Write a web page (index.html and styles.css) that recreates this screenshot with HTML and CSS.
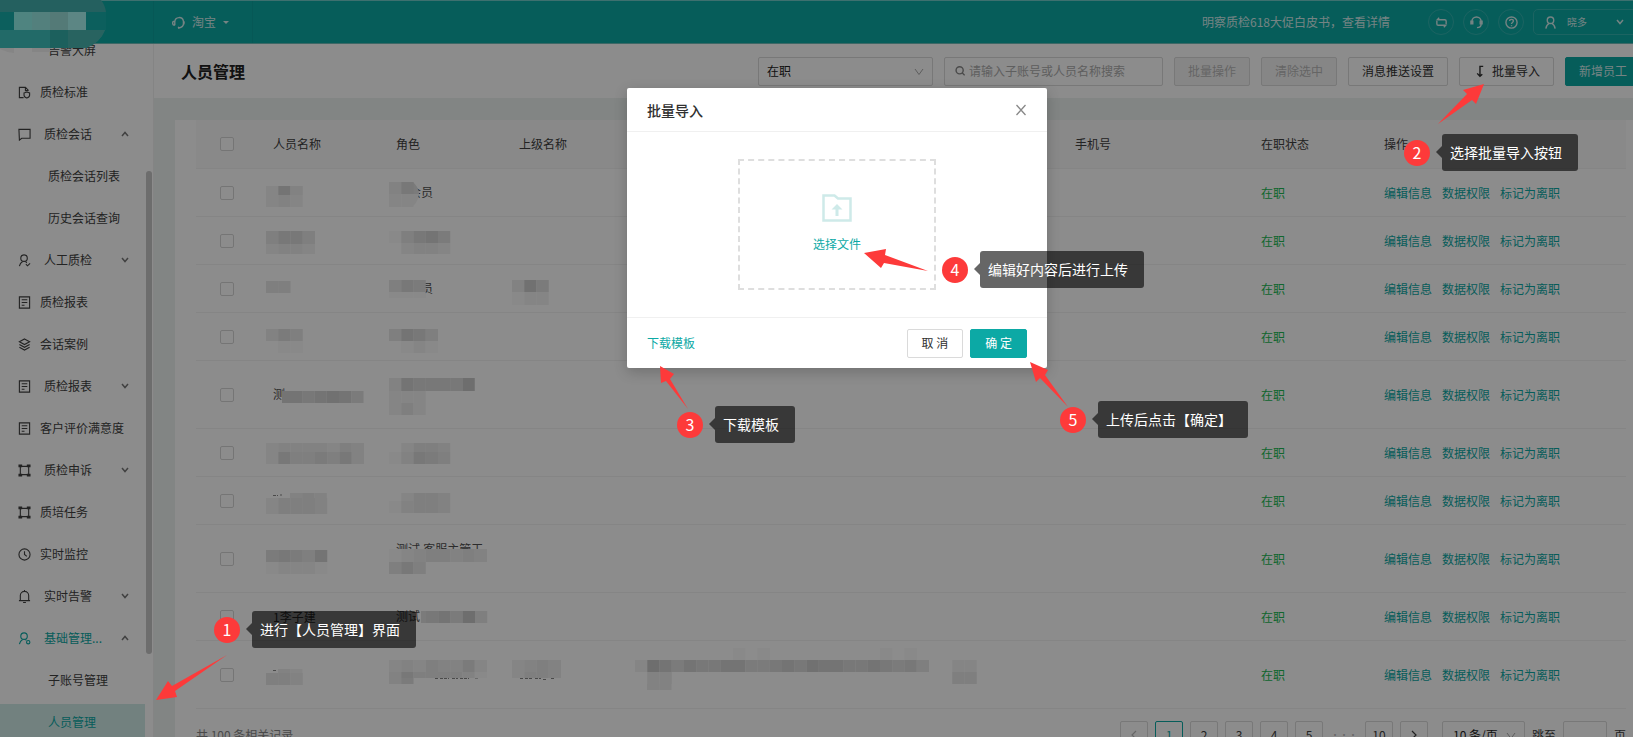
FILE: index.html
```html
<!DOCTYPE html>
<html lang="zh-CN">
<head>
<meta charset="utf-8">
<title>人员管理</title>
<link rel="stylesheet" href="styles.css">
</head>
<body>
<svg class="sprite" aria-hidden="true">
  <symbol id="i-std" viewBox="0 0 14 14"><path d="M6 12.500H1.500v-11H8L11 4.500V5M8 1.500V5h3"/><path d="M6.500 7.500 9.500 6.500 12.500 7.500V10c0 1.500-1.500 2.500-3 3-1.500-.5-3-1.500-3-3z"/></symbol>
  <symbol id="i-chat" viewBox="0 0 14 14"><path d="M1 1.500h12v9.500H4L1.500 13z"/></symbol>
  <symbol id="i-person" viewBox="0 0 14 14"><circle cx="6.500" cy="4.500" r="3.500"/><path d="M5 8C3 9 2 10.500 1.500 13M8 8l1.500 1.500M8.500 11l1.700 1.700L13 10"/></symbol>
  <symbol id="i-report" viewBox="0 0 14 14"><path d="M1.500 1h11v12h-11zM4 4h6M4 7h6M4 10h3"/></symbol>
  <symbol id="i-layers" viewBox="0 0 14 14"><path d="M7 1l5.500 3L7 7 1.500 4zM1.500 7 7 10l5.500-3M1.500 10 7 13l5.500-3"/></symbol>
  <symbol id="i-frame" viewBox="0 0 14 14"><path d="M2.500 2.500h9v9h-9z"/><path class="solid" d="M.5.5h4v3h-4zM9.500.5h4v3h-4zM.5 10.500h4v3h-4zM9.500 10.500h4v3h-4z"/></symbol>
  <symbol id="i-clock" viewBox="0 0 14 14"><circle cx="7" cy="7" r="6"/><path d="M7 3.500V7l2.500 2"/></symbol>
  <symbol id="i-bell" viewBox="0 0 14 14"><path d="M1 11.500h12M2.500 11.500V6a4.500 4.500 0 0 1 9 0v5.500M7 0v1.500M5.500 13.500h3"/></symbol>
  <symbol id="i-admin" viewBox="0 0 14 14"><circle cx="6.500" cy="4.500" r="3.500"/><path d="M5 8C3 9 2 10.500 1.500 13M8 8l1 1"/><circle cx="11" cy="11" r="1.800"/></symbol>
  <symbol id="i-down" viewBox="0 0 10 10"><path d="M2 3l3 3.500L8 3"/></symbol>
  <symbol id="i-up" viewBox="0 0 10 10"><path d="M2 7l3-3.500L8 7"/></symbol>
  <symbol id="i-wide" viewBox="0 0 10 10"><path d="M1 2l4 5.500L9 2"/></symbol>
  <symbol id="i-headset" viewBox="0 0 14 14"><path d="M3 10V6a4.700 4.700 0 0 1 9.300-.5v3c0 2-1.500 3.500-5 4.500l-.5-1.500M3 5.500C1 5.500.7 6.500.7 7.800S1 10 3 10M12.300 5.500c1 .3 1.200 3.200-.3 4"/></symbol>
</svg>

<div class="app">
  <header class="topbar">
    <div class="topbar-brand"></div>
    <button class="shop" type="button">
      <svg class="ico light"><use href="#i-headset"/></svg>淘宝<span class="caret"></span>
    </button>
    <a class="notice" href="#">明察质检618大促白皮书，查看详情</a>
    <div class="topbar-tools">
      <button class="round" type="button" aria-label="切换"><svg class="ico light" viewBox="0 0 14 14"><path d="M4.500 2 2.500 4H10.500q1.500 0 1.500 1.500v3M9.500 12l2-2H3.500Q2 10 2 8.500V5.500"/></svg></button>
      <button class="round" type="button" aria-label="客服"><svg class="ico light" viewBox="0 0 14 14"><path d="M2 8.500V6a5 5 0 0 1 10 0v3c0 2-1.500 3.500-4.500 3.500M1 5.500v3h2v-3zM13 5.500v3h-2v-3z"/></svg></button>
      <button class="round" type="button" aria-label="帮助"><svg class="ico light" viewBox="0 0 14 14"><circle cx="7" cy="7" r="6"/><path d="M5 5.500C5 3 9 3 9 5.500 9 7 7 7 7 8.500M7 10v1"/></svg></button>
      <button class="user" type="button"><svg class="ico light" viewBox="0 0 14 14"><circle cx="7" cy="4.500" r="3.500"/><path d="M5.500 8C3.500 9 2.500 10.500 2 13.500M8.500 8c2 1 3 2.500 3.500 5.500"/></svg><span>晓多</span><svg class="chev light"><use href="#i-down"/></svg></button>
    </div>
  </header>

  <div class="body">
    <nav class="side">
      <ul class="menu">
        <li class="sub">告警大屏</li>
        <li><svg class="ico"><use href="#i-std"/></svg>质检标准</li>
        <li class="group"><svg class="ico"><use href="#i-chat"/></svg>质检会话<svg class="chev"><use href="#i-up"/></svg></li>
        <li class="sub">质检会话列表</li>
        <li class="sub">历史会话查询</li>
        <li class="group"><svg class="ico"><use href="#i-person"/></svg>人工质检<svg class="chev"><use href="#i-down"/></svg></li>
        <li><svg class="ico"><use href="#i-report"/></svg>质检报表</li>
        <li><svg class="ico"><use href="#i-layers"/></svg>会话案例</li>
        <li class="group"><svg class="ico"><use href="#i-report"/></svg>质检报表<svg class="chev"><use href="#i-down"/></svg></li>
        <li><svg class="ico"><use href="#i-report"/></svg>客户评价满意度</li>
        <li class="group"><svg class="ico"><use href="#i-frame"/></svg>质检申诉<svg class="chev"><use href="#i-down"/></svg></li>
        <li><svg class="ico"><use href="#i-frame"/></svg>质培任务</li>
        <li><svg class="ico"><use href="#i-clock"/></svg>实时监控</li>
        <li class="group"><svg class="ico"><use href="#i-bell"/></svg>实时告警<svg class="chev"><use href="#i-down"/></svg></li>
        <li class="group open"><svg class="ico"><use href="#i-admin"/></svg>基础管理...<svg class="chev"><use href="#i-up"/></svg></li>
        <li class="sub">子账号管理</li>
        <li class="sub active">人员管理</li>
      </ul>
      <span class="thumb"></span>
    </nav>

    <main class="main">
      <div class="toolbar">
        <h1>人员管理</h1>
        <div class="select"><select aria-label="在职状态"><option>在职</option></select><svg class="chev"><use href="#i-wide"/></svg></div>
        <label class="search"><svg class="chev" viewBox="0 0 14 14"><circle cx="6.500" cy="6" r="5"/><path d="M10 9.500l3.500 3.500"/></svg><input type="text" placeholder="请输入子账号或人员名称搜索" aria-label="搜索"></label>
        <button class="btn" type="button" disabled>批量操作</button>
        <button class="btn" type="button" disabled>清除选中</button>
        <button class="btn" type="button">消息推送设置</button>
        <button class="btn" type="button"><svg class="ico" viewBox="0 0 14 14"><path d="M11 1.500H7.500V11M4.500 9 7.500 12.200 10 10"/></svg>批量导入</button>
        <button class="btn primary" type="button">新增员工</button>
      </div>

      <section class="card">
        <table class="staff">
          <colgroup><col class="c-check"><col class="c-text"><col class="c-text"><col class="c-text"><col><col class="c-text"><col class="c-phone"><col class="c-text"><col class="c-ops"></colgroup>
          <thead>
            <tr><th class="chk"><input type="checkbox" aria-label="全选"></th><th>人员名称</th><th>角色</th><th>上级名称</th><th></th><th></th><th>手机号</th><th>在职状态</th><th>操作</th></tr>
          </thead>
          <tbody>
            <tr><td class="chk"><input type="checkbox" aria-label="选择"></td>
              <td class="pix"><svg data-strips="0,17,9,273;0,26,12,232"></svg></td>
              <td class="pix"><svg data-strips="0,13,12,36;0,25,13,22"><text x="20" y="28">会员</text><path class="blot" d="M24 13q6 6 6 12H24z"/><path class="blot pale" d="M24 25h6q-1 8-6 12z"/></svg></td>
              <td></td><td></td><td></td><td></td><td class="on">在职</td><td class="ops"><a href="#">编辑信息</a><a href="#">数据权限</a><a href="#">标记为离职</a></td></tr>
            <tr><td class="chk"><input type="checkbox" aria-label="选择"></td>
              <td class="pix"><svg data-strips="0,14,13,4664;0,27,10,2332"></svg></td>
              <td class="pix"><svg data-strips="0,14,12,14675;0,26,11,02332"></svg></td>
              <td></td><td></td><td></td><td></td><td class="on">在职</td><td class="ops"><a href="#">编辑信息</a><a href="#">数据权限</a><a href="#">标记为离职</a></td></tr>
            <tr><td class="chk"><input type="checkbox" aria-label="选择"></td>
              <td class="pix"><svg data-strips="0,16,12,44"></svg></td>
              <td class="pix"><svg data-strips="0,15,12,465;0,27,6,111"><text x="32" y="28">员</text></svg></td>
              <td class="pix"><svg data-strips="0,15,12,385;0,27,13,122"></svg></td>
              <td></td><td></td><td></td><td class="on">在职</td><td class="ops"><a href="#">编辑信息</a><a href="#">数据权限</a><a href="#">标记为离职</a></td></tr>
            <tr><td class="chk"><input type="checkbox" aria-label="选择"></td>
              <td class="pix"><svg data-strips="0,16,12,354;0,28,12,011"></svg></td>
              <td class="pix"><svg data-strips="0,16,12,4764;0,28,12,0121"></svg></td>
              <td></td><td></td><td></td><td></td><td class="on">在职</td><td class="ops"><a href="#">编辑信息</a><a href="#">数据权限</a><a href="#">标记为离职</a></td></tr>
            <tr class="tall"><td class="chk"><input type="checkbox" aria-label="选择"></td>
              <td class="pix"><svg data-strips="16,30,12,7;24,30,12,767875"><text x="7" y="38">测</text></svg></td>
              <td class="pix"><svg data-strips="0,17,13,3766669;0,30,12,222;0,42,12,242"></svg></td>
              <td></td><td></td><td></td><td></td><td class="on">在职</td><td class="ops"><a href="#">编辑信息</a><a href="#">数据权限</a><a href="#">标记为离职</a></td></tr>
            <tr><td class="chk"><input type="checkbox" aria-label="选择"></td>
              <td class="pix"><svg data-strips="0,14,9,23333243;0,23,12,26445463"></svg></td>
              <td class="pix"><svg data-strips="0,14,9,02443;0,23,12,13654"></svg></td>
              <td></td><td></td><td></td><td></td><td class="on">在职</td><td class="ops"><a href="#">编辑信息</a><a href="#">数据权限</a><a href="#">标记为离职</a></td></tr>
            <tr><td class="chk"><input type="checkbox" aria-label="选择"></td>
              <td class="pix"><svg data-strips="24,16,5,343;0,21,16,24443"><path class="scrap" d="M7 18.500h5M14 18h2"/></svg></td>
              <td class="pix"><svg data-strips="0,16,8,02443;0,24,12,13443"></svg></td>
              <td></td><td></td><td></td><td></td><td class="on">在职</td><td class="ops"><a href="#">编辑信息</a><a href="#">数据权限</a><a href="#">标记为离职</a></td></tr>
            <tr class="tall"><td class="chk"><input type="checkbox" aria-label="选择"></td>
              <td class="pix"><svg data-strips="0,25,12,56547;0,37,12,12221"></svg></td>
              <td class="pix"><svg data-strips="0,24,13,12344343;0,37,12,464"><clipPath id="cut"><path d="M0 0h110v24H0z"/></clipPath><text x="7" y="29" clip-path="url(#cut)">测试,客服主管工</text></svg></td>
              <td></td><td></td><td></td><td></td><td class="on">在职</td><td class="ops"><a href="#">编辑信息</a><a href="#">数据权限</a><a href="#">标记为离职</a></td></tr>
            <tr><td class="chk"><input type="checkbox" aria-label="选择"></td>
              <td>1李子建</td>
              <td class="pix"><svg data-strips="32,18,12,5;37,18,12,67594"><text x="7" y="28">测试</text></svg></td>
              <td></td><td></td><td></td><td></td><td class="on">在职</td><td class="ops"><a href="#">编辑信息</a><a href="#">数据权限</a><a href="#">标记为离职</a></td></tr>
            <tr class="tall"><td class="chk"><input type="checkbox" aria-label="选择"></td>
              <td class="pix"><svg data-strips="12,28,4,32;0,32,12,443"><path class="scrap" d="M7 29.500h4"/></svg></td>
              <td class="pix"><svg data-strips="0,19,12,23243352;0,31,6,36444431;0,37,6,35"><path class="scrap" d="M46 37.500h3M51 37.500h9M63 37.500h6M71 37.500h9M86 37h4"/></svg></td>
              <td class="pix"><svg data-strips="0,19,12,2343;0,31,6,2443"><path class="scrap" d="M8 37.500h3M13 37.500h8M23 37.500h6M31 38.500h4M39 37.500h3"/></svg></td>
              <td class="pix"><svg data-strips="98,7,12,1010000000001010;0,19,12,297576677556768776676564;0,31,12,033;12,43,6,33"></svg></td>
              <td class="pix"><svg data-strips="-5,19,12,022;-5,31,12,044"></svg></td>
              <td></td><td class="on">在职</td><td class="ops"><a href="#">编辑信息</a><a href="#">数据权限</a><a href="#">标记为离职</a></td></tr>
          </tbody>
        </table>

        <div class="pager">
          <span class="total">共 100 条相关记录</span>
          <button type="button" class="dim" aria-label="上一页"><svg class="chev" viewBox="0 0 10 10"><path d="M7 1 3 5l4 4"/></svg></button>
          <button type="button" class="current">1</button>
          <button type="button">2</button>
          <button type="button">3</button>
          <button type="button">4</button>
          <button type="button">5</button>
          <span class="dots">•••</span>
          <button type="button">10</button>
          <button type="button" aria-label="下一页"><svg class="chev" viewBox="0 0 10 10"><path d="M3 1l4 4-4 4"/></svg></button>
          <div class="select size"><select aria-label="每页条数"><option>10 条/页</option></select><svg class="chev"><use href="#i-wide"/></svg></div>
          <label class="jump">跳至<input type="text" aria-label="页码">页</label>
        </div>
      </section>
    </main>
  </div>
</div>

<div class="mask">
  <section class="modal" role="dialog" aria-labelledby="modal-title">
    <header><h2 id="modal-title">批量导入</h2><button class="close" type="button" aria-label="关闭"><svg viewBox="0 0 12 12"><path d="M1.500 1l9 10M10.500 1l-9 10"/></svg></button></header>
    <div class="modal-body">
      <button class="drop" type="button">
        <svg viewBox="0 0 30 28"><path d="M1.500 1.500h11l3.500 3h12.500v22h-27z"/><path class="solid" d="M15 10l5.500 5.500h-4V22h-3v-6.500h-4z"/></svg>
        <span>选择文件</span>
      </button>
    </div>
    <footer><a href="#">下载模板</a><button class="btn" type="button">取 消</button><button class="btn primary" type="button">确 定</button></footer>
  </section>
</div>

<div class="notes">
  <svg class="logo-blur" viewBox="0 0 110 54">
    <path fill="#858585" d="M0 47h14v6Q6 52 0 49zM32 47h18v5H32z"/>
    <path fill="#24605f" d="M0 0h101q4 5 5 12H0z"/>
    <path fill="#0c5f5d" d="M0 12h106v18H0z"/>
    <path fill="#4f8480" d="M14 12h18v18H14z"/><path fill="#53807d" d="M32 12h18v18H32z"/><path fill="#547a77" d="M50 12h18v18H50z"/><path fill="#5c8684" d="M68 12h18v18H68z"/>
    <path fill="#226a68" d="M0 30h105q-5 13-19 18H0z"/><path fill="#1c605d" d="M50 30h18v18H50z"/><path fill="#286360" d="M68 30h37q-5 13-19 18H68z"/>
  </svg>
  <svg class="arrows">
    <path d="M227 655 175 691l2 6-21 3 12-19 4 5z"/>
    <path d="M1438 124 1467 94l-4-4 21-6-8 20-4-4z"/>
    <path d="M688 409 670 379l4-5-14-8 1 17 5-2z"/>
    <path d="M928 271 885 255l1-6-22 4 17 15 3-5z"/>
    <path d="M1068 407 1045 375l3-5-18-8 6 20 4-4z"/>
  </svg>
  <div class="note n1"><b>1</b><p>进行【人员管理】界面</p></div>
  <div class="note n2"><b>2</b><p>选择批量导入按钮</p></div>
  <div class="note n3"><b>3</b><p>下载模板</p></div>
  <div class="note n4"><b>4</b><p>编辑好内容后进行上传</p></div>
  <div class="note n5"><b>5</b><p>上传后点击【确定】</p></div>
</div>
<script src="mosaic.js"></script>
</body>
</html>
```

FILE: styles.css
```css
* { box-sizing: border-box; }

body {
  margin: 0;
  height: 100vh;
  overflow: hidden;
  position: relative;
  font: 12px/18px "Noto Sans CJK SC", "Noto Sans", sans-serif;
  color: #404040;
  background: #fff;
}

button, input, select { font: inherit; color: inherit; margin: 0; }
button { cursor: pointer; }
a { color: #0ca9a5; text-decoration: none; }
ul, p, h1, h2 { margin: 0; padding: 0; }

svg { fill: none; stroke: currentColor; stroke-width: 1.200; flex: none; }
.solid { fill: currentColor; stroke: none; }
.sprite { position: absolute; width: 0; height: 0; }
.ico { width: 13px; height: 13px; }
.chev { width: 10px; height: 10px; }

.app { height: 100vh; display: flex; flex-direction: column; overflow: hidden; }

/* top bar */
.topbar {
  flex: none;
  height: 44px;
  display: flex;
  align-items: center;
  background: #0ca9a5;
  border-top: 1px solid #70cdca;
  border-bottom: 1px solid #70bdba;
  color: #d5efee;
}
.topbar-brand { width: 154px; height: 100%; border-right: 1px solid #0ba19d; }
.shop {
  height: 100%;
  width: 99px;
  display: flex;
  align-items: center;
  gap: 7px;
  padding: 0 0 0 18px;
  background: none;
  border: 0;
  border-right: 1px solid #0ba19d;
}
.light { stroke-width: 1.500; color: #d5efee; }
.caret { border: 3px solid transparent; border-top-color: #d5efee; border-bottom: 0; }
.notice { margin-left: auto; color: #d5efee; }
.topbar-tools { display: flex; align-items: center; gap: 9px; margin: 0 -10px 0 38px; }
.round {
  width: 26px;
  height: 26px;
  display: grid;
  place-items: center;
  padding: 0;
  border: 1px solid #33b6b2;
  border-radius: 50%;
  background: none;
}
.user {
  width: 110px;
  height: 26px;
  display: flex;
  align-items: center;
  gap: 10px;
  padding: 0 17px 0 10px;
  border: 1px solid #33b6b2;
  border-radius: 5px;
  background: none;
  font-size: 10px;
}
.user .chev { margin-left: auto; }

/* side menu */
.body { flex: 1; min-height: 0; display: flex; }
.side { width: 154px; flex: none; position: relative; overflow: hidden; border-right: 1px solid #f0f0f0; }
.menu { list-style: none; margin-top: -12px; }
.menu li {
  height: 36px;
  margin: 0 8px 6px 0;
  padding: 0 15px 0 18px;
  display: flex;
  align-items: center;
  gap: 9px;
}
.menu .group { gap: 13px; }
.menu .chev { margin-left: auto; stroke-width: 1.500; color: #777; }
.menu .sub { padding-left: 48px; }
.menu .open { color: #0ca9a5; }
.menu .active { color: #0ca9a5; background: #d0ebe7; }
.thumb {
  position: absolute;
  top: 127px;
  right: 1px;
  width: 6px;
  height: 483px;
  border-radius: 3px;
  background: #c6c6c6;
}

/* page head */
.main { flex: 1; min-width: 0; background: #edf3f1; }
.toolbar {
  height: 54px;
  display: flex;
  align-items: center;
  gap: 11px;
  padding: 0 0 0 27px;
  margin-right: -8px;
  background: #fff;
}
.toolbar h1 { margin-right: auto; font-size: 16px; line-height: 24px; font-weight: 700; color: #222; }
.select { position: relative; width: 175px; height: 29px; }
.select select {
  width: 100%;
  height: 100%;
  padding: 0 8px;
  appearance: none;
  border: 1px solid #dadada;
  border-radius: 2px;
  background: #fff;
  color: #222;
}
.select .chev { position: absolute; right: 9px; top: 10px; stroke-width: 1; color: #aaa; pointer-events: none; }
.search {
  width: 219px;
  height: 29px;
  display: flex;
  align-items: center;
  gap: 4px;
  padding: 0 10px;
  border: 1px solid #dadada;
  border-radius: 2px;
  color: #888;
}
.search .chev { stroke-width: 2; }
.search input { flex: 1; min-width: 0; border: 0; padding: 0; outline: 0; background: none; }
.search input::placeholder { color: #adadad; }
.btn {
  height: 29px;
  display: flex;
  align-items: center;
  justify-content: center;
  gap: 6px;
  padding: 0 14px;
  border: 1px solid #dadada;
  border-radius: 2px;
  background: #fff;
  color: #303030;
  white-space: nowrap;
}
.toolbar .btn { padding: 0 13px; }
.btn .ico { stroke-width: 1.500; }
.btn:disabled { background: #f5f5f5; color: #b8b8b8; }
.btn.primary { background: #0ca9a5; border-color: #0ca9a5; color: #fff; }
.toolbar .primary { color: #d5efee; }

/* staff table */
.card { margin: 22px 0 0 21px; padding: 0 7px 24px 21px; background: #fff; }
.staff { width: 100%; border-collapse: separate; border-spacing: 0; table-layout: fixed; }
.c-check { width: 61px; }
.c-text { width: 123px; }
.c-phone { width: 186px; }
.c-ops { width: 258px; }
.staff th, .staff td {
  height: 48px;
  padding: 0 0 0 16px;
  text-align: left;
  font-weight: 400;
  border-bottom: 1px solid #f2f2f2;
}
.staff th { height: 49px; background: #fafafa; }
.staff .tall td { height: 68px; }
.staff .chk { padding: 0; text-align: center; line-height: 14px; }
.staff .pix { padding-left: 9px; vertical-align: top; }
.pix svg { display: block; width: 110px; height: 47px; overflow: visible; stroke: none; }
.tall .pix svg { height: 67px; }
.pix text { fill: #505050; }
.pix .scrap { stroke: #888; stroke-width: 1; stroke-dasharray: 3 1; }
.blot { fill: #e0e0e0; }
.blot.pale { fill: #f3f3f3; }
.staff .on { color: #20ba54; }
.ops a { margin-right: 10px; }
input[type="checkbox"] {
  appearance: none;
  display: inline-block;
  width: 14px;
  height: 14px;
  border: 1px solid #d6d6d6;
  border-radius: 2px;
  vertical-align: top;
  background: #fff;
}

/* pager */
.pager { display: flex; align-items: center; gap: 7px; padding-top: 12px; }
.total { margin-right: auto; color: #888; }
.pager button {
  width: 28px;
  height: 28px;
  padding: 0;
  display: grid;
  place-items: center;
  border: 1px solid #dadada;
  border-radius: 2px;
  background: #fff;
}
.pager .current { border-color: #0ca9a5; color: #0ca9a5; }
.pager .dim { color: #bbb; }
.dots { width: 28px; text-align: center; font-size: 9px; color: #bbb; }
.pager .size { width: 83px; height: 28px; margin-left: 7px; }
.pager .size select { padding: 0 10px; }
.jump { display: flex; align-items: center; gap: 7px; }
.jump input { width: 44px; height: 28px; border: 1px solid #dadada; border-radius: 2px; }

/* import dialog */
.mask {
  position: absolute;
  inset: 0;
  display: flex;
  justify-content: center;
  align-items: flex-start;
  padding: 88px 0 0 41px;
  background: rgba(0, 0, 0, .45);
}
.modal { width: 420px; background: #fff; border-radius: 2px; box-shadow: 0 4px 14px rgba(0, 0, 0, .2); }
.modal header, .modal footer { display: flex; align-items: center; padding: 0 20px; }
.modal header { height: 44px; border-bottom: 1px solid #f0f0f0; }
.modal h2 { margin-right: auto; font-size: 14px; line-height: 20px; font-weight: 500; color: #303030; }
.close { width: 12px; height: 12px; padding: 0; border: 0; background: none; color: #888; }
.close svg { display: block; width: 12px; height: 12px; stroke-width: 1.300; }
.modal-body { padding: 27px 0; display: flex; justify-content: center; }
.drop {
  width: 198px;
  height: 131px;
  display: flex;
  flex-direction: column;
  align-items: center;
  gap: 13px;
  padding: 33px 0 0;
  border: 2px dashed #dedede;
  background: none;
  color: #0ca9a5;
}
.drop svg { width: 30px; height: 28px; stroke-width: 2.500; color: #ceeae9; }
.modal footer { height: 51px; gap: 7px; border-top: 1px solid #f0f0f0; }
.modal footer a { margin-right: auto; }
.modal footer .btn { min-width: 56px; }

/* numbered guide notes */
.notes { position: absolute; inset: 0; pointer-events: none; }
.logo-blur { position: absolute; left: 0; top: 0; width: 110px; height: 54px; stroke: none; }
.arrows { position: absolute; left: 0; top: 0; width: 100%; height: 100%; fill: #fd3a3a; stroke: none; }
.note { position: absolute; display: flex; align-items: center; gap: 12px; }
.note b {
  width: 26px;
  height: 26px;
  border-radius: 50%;
  background: #fd3a3a;
  color: #fff;
  font-size: 16px;
  line-height: 25px;
  font-weight: 400;
  text-align: center;
}
.note p {
  position: relative;
  padding: 0 16px 0 8px;
  border-radius: 3px;
  background: rgba(0, 0, 0, .6);
  color: #fff;
  font-size: 14px;
  line-height: 37px;
  white-space: nowrap;
}
.note p::before {
  content: "";
  position: absolute;
  right: 100%;
  top: 12px;
  border: 6px solid transparent;
  border-right-color: rgba(0, 0, 0, .6);
  border-left: 0;
}
.n1 { left: 214px; top: 611px; }
.n2 { left: 1404px; top: 134px; }
.n3 { left: 677px; top: 406px; }
.n4 { left: 942px; top: 251px; }
.n5 { left: 1060px; top: 401px; }
```

FILE: mosaic.js
```js
// Each strip is "x,y,height,shades": one digit per 12px block, 0 = blank, 9 = darkest.
const NS = "http://www.w3.org/2000/svg";
const BLOCK = 12.25;

document.querySelectorAll("svg[data-strips]").forEach((svg) => {
  svg.dataset.strips.split(";").forEach((strip) => {
    const [x, y, height, shades] = strip.split(",");
    [...shades].forEach((digit, i) => {
      if (digit === "0") return;
      const level = Math.round(255 * (1 - Number(digit) * 0.024));
      const rect = document.createElementNS(NS, "rect");
      rect.setAttribute("x", Number(x) + i * BLOCK);
      rect.setAttribute("y", y);
      rect.setAttribute("width", BLOCK);
      rect.setAttribute("height", height);
      rect.setAttribute("fill", `rgb(${level},${level},${level})`);
      svg.appendChild(rect);
    });
  });
});
```
